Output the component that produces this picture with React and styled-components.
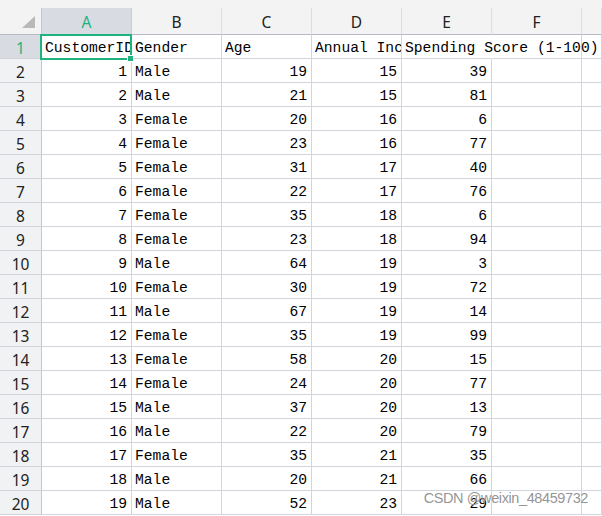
import styled, { createGlobalStyle } from 'styled-components';

const GlobalStyle = createGlobalStyle`
    html, body {
        margin: 0;
        padding: 0;
        background: #ffffff;
        overflow: hidden;
    }
`;

const green = '#1db37c';
const gridLine = '#d2d5dd';
const headLine = '#c3c7d0';

const Page = styled.div`
    position: relative;
    width: 602px;
    height: 516px;
    overflow: hidden;
    background: #ffffff;
`;

const Sheet = styled.div`
    display: grid;
    grid-template-columns: 42px repeat(6, 90px) 1fr;
    grid-template-rows: 8px 27px repeat(20, 24px);
`;

const TopStrip = styled.div`
    grid-column: 1 / -1;
    background: #f3f3f4;
`;

const Corner = styled.div`
    display: flex;
    justify-content: flex-end;
    align-items: flex-end;
    padding: 0 6px 6px 0;
    background: #f3f3f4;
    border-right: 1px solid ${headLine};
    border-bottom: 1px solid #b6bac5;
`;

const ColHead = styled.div`
    display: flex;
    align-items: center;
    justify-content: center;
    background: ${p => (p.$active ? '#d8dbe1' : '#f3f3f4')};
    color: ${p => (p.$active ? green : '#222')};
    border-right: 1px solid ${p => (p.$active ? '#c9ccd4' : '#dcdee3')};
    border-bottom: 1px solid #b6bac5;
    font-family: "Noto Sans", "DejaVu Sans", sans-serif;
    font-size: 15.5px;
    padding-top: 1px;
`;

const RowHead = styled.div`
    display: flex;
    align-items: center;
    justify-content: center;
    background: ${p => (p.$active ? '#d8dbe1' : '#f1f2f4')};
    color: ${p => (p.$active ? green : '#222')};
    border-right: 1px solid ${headLine};
    border-bottom: 1px solid #cfd2da;
    font-family: "Noto Sans", "DejaVu Sans", sans-serif;
    font-size: 15.5px;
    padding-top: 2px;
`;

const Cell = styled.div`
    position: relative;
    z-index: ${p => (p.$spill || p.$active ? 1 : 0)};
    display: flex;
    align-items: center;
    justify-content: ${p => (p.$num ? 'flex-end' : 'flex-start')};
    min-width: 0;
    padding: 3px ${p => (p.$num ? '4px' : '0')} 0 ${p => (p.$num ? '0' : '3px')};
    border-right: 1px solid ${p => (p.$spill ? 'transparent' : gridLine)};
    border-bottom: 1px solid ${gridLine};
    font-family: "Liberation Mono", "DejaVu Sans Mono", monospace;
    font-size: 14.67px;
    color: #000;
`;

const Text = styled.span`
    white-space: nowrap;
    overflow: ${p => (p.$spill ? 'visible' : 'hidden')};
    min-width: 0;
`;

const Selection = styled.div`
    position: absolute;
    top: -1px;
    left: -2px;
    right: -1px;
    bottom: -2px;
    border: 2px solid ${green};
    pointer-events: none;
`;

const Handle = styled.div`
    position: absolute;
    right: -4px;
    bottom: -4px;
    width: 5px;
    height: 5px;
    background: ${green};
    border: 1px solid #fff;
`;

const Watermark = styled.div`
    position: absolute;
    right: 14px;
    bottom: 10px;
    font-family: "Liberation Sans", Arial, sans-serif;
    font-size: 14.5px;
    letter-spacing: -0.4px;
    color: rgba(120, 120, 120, 0.8);
    text-shadow: 0 0 1px rgba(255, 255, 255, 0.8);
`;

const cols = ['A', 'B', 'C', 'D', 'E', 'F', ''];

const data = [
    [1, 'Male', 19, 15, 39],
    [2, 'Male', 21, 15, 81],
    [3, 'Female', 20, 16, 6],
    [4, 'Female', 23, 16, 77],
    [5, 'Female', 31, 17, 40],
    [6, 'Female', 22, 17, 76],
    [7, 'Female', 35, 18, 6],
    [8, 'Female', 23, 18, 94],
    [9, 'Male', 64, 19, 3],
    [10, 'Female', 30, 19, 72],
    [11, 'Male', 67, 19, 14],
    [12, 'Female', 35, 19, 99],
    [13, 'Female', 58, 20, 15],
    [14, 'Female', 24, 20, 77],
    [15, 'Male', 37, 20, 13],
    [16, 'Male', 22, 20, 79],
    [17, 'Female', 35, 21, 35],
    [18, 'Male', 20, 21, 66],
    [19, 'Male', 52, 23, 29],
];

const Triangle = () => (
    <svg width="13" height="12" viewBox="0 0 13 12">
        <polygon points="0,12 13,12 13,0" fill="#b9b9b9" />
    </svg>
);

const Row = ({ n, r }) => (
    <>
        <RowHead>{n}</RowHead>
        <Cell $num><Text>{r[0]}</Text></Cell>
        <Cell><Text>{r[1]}</Text></Cell>
        <Cell $num><Text>{r[2]}</Text></Cell>
        <Cell $num><Text>{r[3]}</Text></Cell>
        <Cell $num><Text>{r[4]}</Text></Cell>
        <Cell />
        <Cell />
    </>
);

const App = () => {
    return (
        <Page>
            <GlobalStyle />
            <Sheet>
                <TopStrip />
                <Corner>
                    <Triangle />
                </Corner>
                {cols.map((c, i) => (
                    <ColHead key={i} $active={c === 'A'}>{c}</ColHead>
                ))}

                <RowHead $active>1</RowHead>
                <Cell $active>
                    <Text>CustomerID</Text>
                    <Selection>
                        <Handle />
                    </Selection>
                </Cell>
                <Cell><Text>Gender</Text></Cell>
                <Cell><Text>Age</Text></Cell>
                <Cell><Text>Annual Income (k$)</Text></Cell>
                <Cell $spill><Text $spill>Spending Score (1-100)</Text></Cell>
                <Cell />
                <Cell />

                {data.map((r, i) => (
                    <Row key={i} n={i + 2} r={r} />
                ))}
            </Sheet>
            <Watermark>CSDN @weixin_48459732</Watermark>
        </Page>
    );
};

export default App;
